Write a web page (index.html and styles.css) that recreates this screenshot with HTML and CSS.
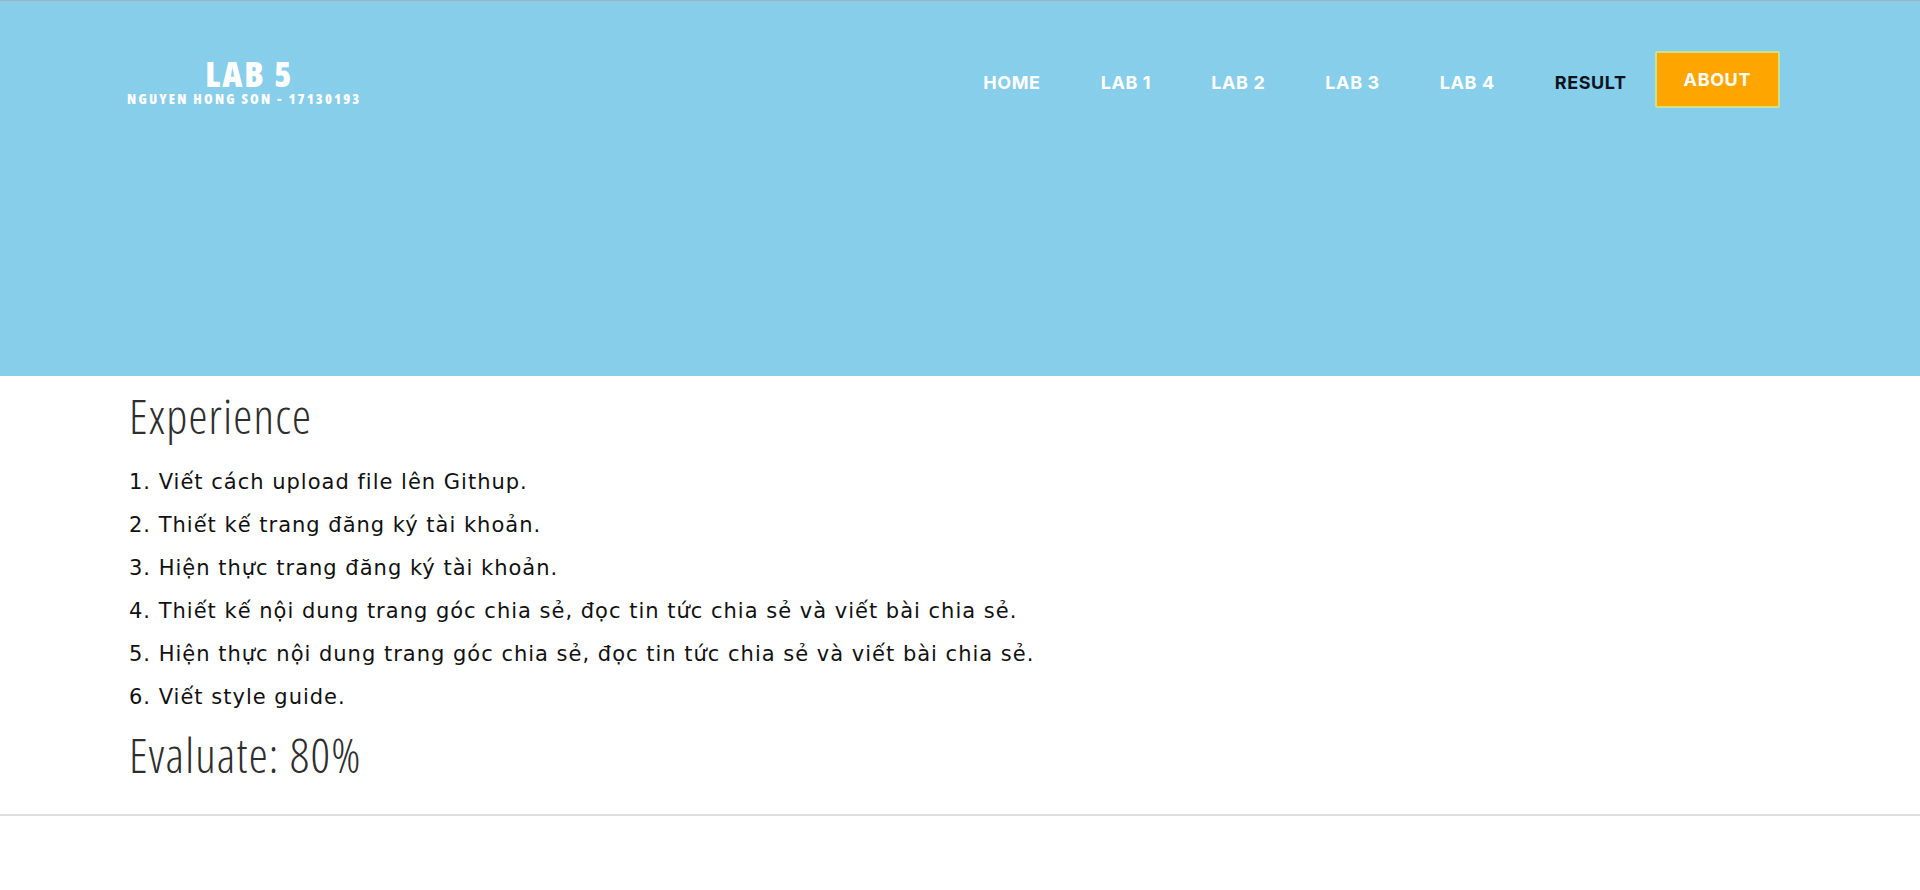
FILE: index.html
```html
<!DOCTYPE html>
<html lang="vi">
<head>
<meta charset="utf-8">
<title>Lab 5 - Result</title>
<link rel="stylesheet" href="styles.css">
</head>
<body>
<header class="hero">
  <div class="topbar">
    <a class="brand" href="#">
      <span class="brand-title">LAB 5</span>
      <span class="brand-sub">NGUYEN HONG SON - 17130193</span>
    </a>
    <nav class="menu">
      <a class="menu-link" href="#">HOME</a>
      <a class="menu-link" href="#">LAB 1</a>
      <a class="menu-link" href="#">LAB 2</a>
      <a class="menu-link" href="#">LAB 3</a>
      <a class="menu-link" href="#">LAB 4</a>
      <a class="menu-link is-active" href="#">RESULT</a>
      <a class="menu-button" href="#">ABOUT</a>
    </nav>
  </div>
</header>
<main class="content">
  <h2 class="section-title">Experience</h2>
  <ol class="tasks">
    <li>1. Viết cách upload file lên Githup.</li>
    <li>2. Thiết kế trang đăng ký tài khoản.</li>
    <li>3. Hiện thực trang đăng ký tài khoản.</li>
    <li>4. Thiết kế nội dung trang góc chia sẻ, đọc tin tức chia sẻ và viết bài chia sẻ.</li>
    <li>5. Hiện thực nội dung trang góc chia sẻ, đọc tin tức chia sẻ và viết bài chia sẻ.</li>
    <li>6. Viết style guide.</li>
  </ol>
  <h2 class="section-title evaluate">Evaluate: 80%</h2>
</main>
<hr class="divider">
</body>
</html>
```

FILE: styles.css
```css
* { box-sizing: border-box; }

body {
  margin: 0;
  background: #ffffff;
  font-family: "DejaVu Sans", "Inter", sans-serif;
  color: #111111;
}

a { text-decoration: none; }

.hero {
  height: 376px;
  background: #87ceeb;
  border-top: 1px solid #9fb2bd;
}

.topbar {
  display: flex;
  justify-content: space-between;
  align-items: flex-start;
  padding: 50px 140px 0 127px;
}

.brand {
  display: flex;
  flex-direction: column;
  align-items: center;
  margin-top: 6px;
  color: #ffffff;
  font-family: "Open Sans", sans-serif;
  font-stretch: 75%;
  font-weight: 800;
}

.brand-title {
  font-size: 35px;
  line-height: 34px;
  letter-spacing: 2px;
  padding-left: 10px;
}

.brand-sub {
  font-size: 14px;
  line-height: 16px;
  letter-spacing: 2.2px;
}

.menu {
  display: flex;
  align-items: flex-start;
  font-family: "Inter", sans-serif;
}

.menu-link {
  color: #ffffff;
  font-weight: 700;
  font-size: 18px;
  letter-spacing: 0.6px;
  padding: 3px 30px 0;
  line-height: 57px;
}

.menu-link.is-active {
  color: #0d1420;
}

.menu-button {
  margin-left: -2px;
  background: #ffa500;
  border: 2px solid #cfe28a;
  border-radius: 2px;
  color: #ffffff;
  font-weight: 700;
  font-size: 18px;
  letter-spacing: 0.6px;
  padding: 0 27px;
  line-height: 53px;
}

.content {
  padding: 10px 127px 0 129px;
}

.section-title {
  margin: 0;
  font-family: "Open Sans", sans-serif;
  font-stretch: 75%;
  font-weight: 300;
  font-size: 48px;
  letter-spacing: 1.2px;
  line-height: 60px;
  color: #2e2e2e;
}

.tasks {
  list-style: none;
  margin: 15px 0 0;
  padding: 0;
}

.tasks li {
  font-size: 21px;
  letter-spacing: 1px;
  line-height: 43px;
  color: #111111;
}

.evaluate {
  margin-top: 6px;
}

.divider {
  margin: 29px 0 0;
  border: 0;
  border-top: 2px solid #dddddd;
  box-shadow: 0 1px 2px rgba(0,0,0,0.05);
}
```
